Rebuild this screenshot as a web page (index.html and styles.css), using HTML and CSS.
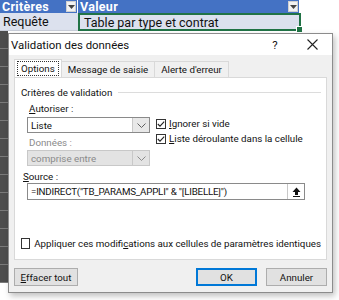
FILE: index.html
```html
<!DOCTYPE html>
<html lang="fr">
<head>
  <meta charset="UTF-8" />
  <title>Validation des données</title>
  <link rel="stylesheet" href="styles.css">
</head>
<body>
  <div id="feuille">
    <div class="ligne entete">
      <div class="cellule col-a">Critères<span class="filtre"><svg width="7" height="4" viewBox="0 0 7 4"><path d="M0 0h7L3.5 4z" fill="#444"/></svg></span></div>
      <div class="cellule col-b">Valeur<span class="filtre"><svg width="7" height="4" viewBox="0 0 7 4"><path d="M0 0h7L3.5 4z" fill="#444"/></svg></span></div>
    </div>
    <div class="ligne donnees">
      <div class="cellule col-a">Requête</div>
      <div class="cellule col-b active">Table par type et contrat<span class="poignee"></span></div>
    </div>
    <div class="ligne sombre"></div>
    <div class="ligne sombre"></div>
    <div class="ligne sombre"></div>
    <div class="ligne sombre"></div>
    <div class="ligne sombre"></div>
    <div class="ligne sombre"></div>
    <div class="ligne sombre"></div>
    <div class="ligne sombre"></div>
    <div class="ligne sombre"></div>
    <div class="ligne sombre"></div>
    <div class="ligne sombre"></div>
    <div class="ligne sombre"></div>
    <div class="ligne sombre"></div>
    <div class="ligne sombre"></div>
  </div>

  <div id="dialogue">
    <div class="titre">
      <span class="titre-texte">Validation des données</span>
      <span class="aide">?</span>
      <span class="fermer"><svg width="11" height="11" viewBox="0 0 11 11"><path d="M0.5 0.5l10 10M10.5 0.5l-10 10" stroke="#222" stroke-width="1.1"/></svg></span>
    </div>

    <div class="corps">
      <div class="onglets">
        <div class="onglet actif"><span class="focus">Options</span></div>
        <div class="onglet">Message de saisie</div>
        <div class="onglet">Alerte d'erreur</div>
      </div>

      <div class="panneau">
        <div class="legende"><span>Critères de validation</span><span class="trait"></span></div>

        <div class="bloc-haut">
          <div class="colonne-gauche">
            <div class="etiquette"><u>A</u>utoriser :</div>
            <div class="liste">
              <span class="valeur">Liste</span>
              <span class="fleche"><svg width="9" height="5" viewBox="0 0 9 5"><path d="M0.5 0.5l4 4 4-4" fill="none" stroke="#606060"/></svg></span>
            </div>
            <div class="etiquette grise">Données :</div>
            <div class="liste inactive">
              <span class="valeur">comprise entre</span>
              <span class="fleche"><svg width="9" height="5" viewBox="0 0 9 5"><path d="M0.5 0.5l4 4 4-4" fill="none" stroke="#8a8a8a"/></svg></span>
            </div>
          </div>
          <div class="colonne-droite">
            <label class="case"><span class="boite"><svg width="8" height="8" viewBox="0 0 8 8"><path d="M0.8 4l2.2 2.2L7.2 1.6" fill="none" stroke="#222" stroke-width="1.1"/></svg></span><span><u>I</u>gnorer si vide</span></label>
            <label class="case"><span class="boite"><svg width="8" height="8" viewBox="0 0 8 8"><path d="M0.8 4l2.2 2.2L7.2 1.6" fill="none" stroke="#222" stroke-width="1.1"/></svg></span><span><u>L</u>iste déroulante dans la cellule</span></label>
          </div>
        </div>

        <div class="etiquette source-titre"><u>S</u>ource :</div>
        <div class="source">
          <span class="formule">=INDIRECT("TB_PARAMS_APPLI" &amp; "[LIBELLE]")</span>
          <span class="reduire"><svg width="9" height="10" viewBox="0 0 9 10"><path d="M4.5 0.5L8.5 5H6v3H3V5H0.5z" fill="#111"/><path d="M1 9.5h7" stroke="#111"/></svg></span>
        </div>

        <label class="case appliquer"><span class="boite"></span><span>Appliquer ces modifi<u>c</u>ations aux cellules de paramètres identiques</span></label>
      </div>

      <div class="boutons">
        <button class="bouton"><u>E</u>ffacer tout</button>
        <span class="espace"></span>
        <button class="bouton defaut">OK</button>
        <button class="bouton">Annuler</button>
      </div>
    </div>
  </div>
</body>
</html>
```

FILE: styles.css
```css
body {
  margin: 0;
  background-color: #fff;
  font-family: Roboto, sans-serif;
  width: 339px;
  height: 300px;
  overflow: hidden;
  position: relative;
}

#feuille {
  display: flex;
  flex-direction: column;
  font-size: 12.5px;
}

.ligne {
  display: flex;
  height: 18px;
}

.cellule {
  display: flex;
  align-items: center;
  padding-left: 3px;
  box-sizing: border-box;
  position: relative;
  white-space: nowrap;
}

.col-a {
  width: 78px;
}

.col-b {
  width: 223px;
  padding-left: 4px;
}

.entete {
  height: 13px;
}

.entete .cellule {
  height: 13px;
  background-color: #4472c4;
  color: #fff;
  font-weight: bold;
  font-size: 12.5px;
  letter-spacing: 0.3px;
  line-height: 13px;
  padding-left: 2px;
  border-right: 1px solid #fff;
}

.entete .col-b {
  width: 222px;
  padding-left: 2px;
}

.filtre {
  position: absolute;
  right: 1px;
  top: 1px;
  width: 10px;
  height: 11px;
  background-color: #f2f2f2;
  border: 1px solid #d0d0d0;
  box-sizing: border-box;
  display: flex;
  align-items: center;
  justify-content: center;
}

.donnees .cellule {
  background-color: #dce1ee;
  color: #111;
  border-bottom: 1px solid #c8cdd8;
}

.donnees .active {
  border: 2px solid #217346;
}

.poignee {
  position: absolute;
  right: -4px;
  bottom: -4px;
  width: 5px;
  height: 5px;
  background-color: #217346;
  border: 1px solid #fff;
}

.sombre {
  height: 18px;
  width: 8px;
  box-sizing: border-box;
  background-color: #4d4d4d;
  border-bottom: 1px solid #7a7a7a;
}

#dialogue {
  position: absolute;
  left: 8px;
  top: 33px;
  width: 325px;
  height: 260px;
  box-sizing: border-box;
  border: 1px solid #8c8c8c;
  background-color: #f0f0f0;
  box-shadow: 2px 3px 6px rgba(0, 0, 0, 0.25);
  display: flex;
  flex-direction: column;
  font-size: 9.75px;
  color: #111;
  white-space: nowrap;
}

.titre {
  height: 22px;
  background-color: #fff;
  display: flex;
  align-items: center;
  padding-left: 2px;
  font-size: 11.4px;
}

.titre-texte {
  flex: 1;
}

.aide {
  width: 10px;
  text-align: center;
  margin-right: 27px;
}

.fermer {
  width: 11px;
  margin-right: 14px;
  display: flex;
}

.corps {
  flex: 1;
  display: flex;
  flex-direction: column;
  padding: 5px 5px 6px 5px;
}

.onglets {
  display: flex;
  height: 17px;
  align-items: flex-end;
  position: relative;
  z-index: 1;
}

.onglet {
  height: 15px;
  border: 1px solid #d9d9d9;
  border-bottom: none;
  padding: 0 6px;
  display: flex;
  align-items: center;
  margin-left: -1px;
  background-color: #f0f0f0;
}

.onglet.actif {
  background-color: #fff;
  height: 17px;
  padding: 0 3px;
  margin-left: 0;
}

.focus {
  outline: 1px dotted #333;
  padding: 0 3px;
  line-height: 13px;
}

.panneau {
  background-color: #fff;
  border: 1px solid #d9d9d9;
  height: 183px;
  box-sizing: border-box;
  padding: 7px 5px 0 6px;
  display: flex;
  flex-direction: column;
}

.legende {
  display: flex;
  align-items: center;
  height: 14px;
}

.trait {
  flex: 1;
  height: 1px;
  background-color: #dcdcdc;
  margin-left: 6px;
}

.bloc-haut {
  display: flex;
}

.colonne-gauche {
  width: 123px;
  margin-left: 6px;
  display: flex;
  flex-direction: column;
}

.colonne-droite {
  display: flex;
  flex-direction: column;
  margin-left: 6px;
  padding-top: 17px;
}

.etiquette {
  height: 14px;
  display: flex;
  align-items: center;
  margin-left: 2px;
  margin-top: 2px;
  margin-bottom: 2px;
}

.grise {
  color: #8a8a8a;
  margin-bottom: 1px;
}

.liste {
  height: 16px;
  border: 1px solid #8a8a8a;
  box-sizing: border-box;
  display: flex;
  align-items: center;
  background-color: #fff;
}

.liste .valeur {
  flex: 1;
  padding-left: 3px;
}

.fleche {
  width: 16px;
  height: 14px;
  display: flex;
  align-items: center;
  justify-content: center;
  border-left: 1px solid #c8c8c8;
  background-color: #e8e8e8;
}

.liste.inactive {
  background-color: #e3e3e3;
  border-color: #c8c8c8;
  color: #8a8a8a;
}

.liste.inactive .fleche {
  background-color: #e3e3e3;
}

.case {
  display: flex;
  align-items: center;
  height: 15px;
  gap: 3px;
}

.boite {
  width: 10px;
  height: 10px;
  border: 1px solid #333;
  box-sizing: border-box;
  display: flex;
  align-items: center;
  justify-content: center;
  background-color: #fff;
}

.source-titre {
  margin-top: 3px;
  margin-bottom: 0;
}

.source {
  margin-left: 6px;
  width: 278px;
  height: 17px;
  box-sizing: border-box;
  border: 1px solid #8a8a8a;
  display: flex;
  align-items: center;
}

.formule {
  flex: 1;
  padding-left: 3px;
  letter-spacing: -0.2px;
}

.reduire {
  width: 16px;
  height: 15px;
  display: flex;
  align-items: center;
  justify-content: center;
  border-left: 1px solid #c8c8c8;
}

.appliquer {
  margin-top: auto;
  margin-bottom: 8px;
  gap: 4px;
}

.appliquer .boite {
  width: 11px;
  height: 11px;
}

.boutons {
  display: flex;
  margin-top: 8px;
  gap: 9px;
}

.bouton {
  height: 18px;
  padding: 0;
  font-family: Roboto, sans-serif;
  font-size: 9.75px;
  color: #111;
  background-color: #e1e1e1;
  border: 1px solid #adadad;
  width: 61px;
  white-space: nowrap;
}

.bouton:first-child {
  width: 64px;
}

.bouton.defaut {
  border: 2px solid #0078d7;
}

.espace {
  flex: 1;
}
```
